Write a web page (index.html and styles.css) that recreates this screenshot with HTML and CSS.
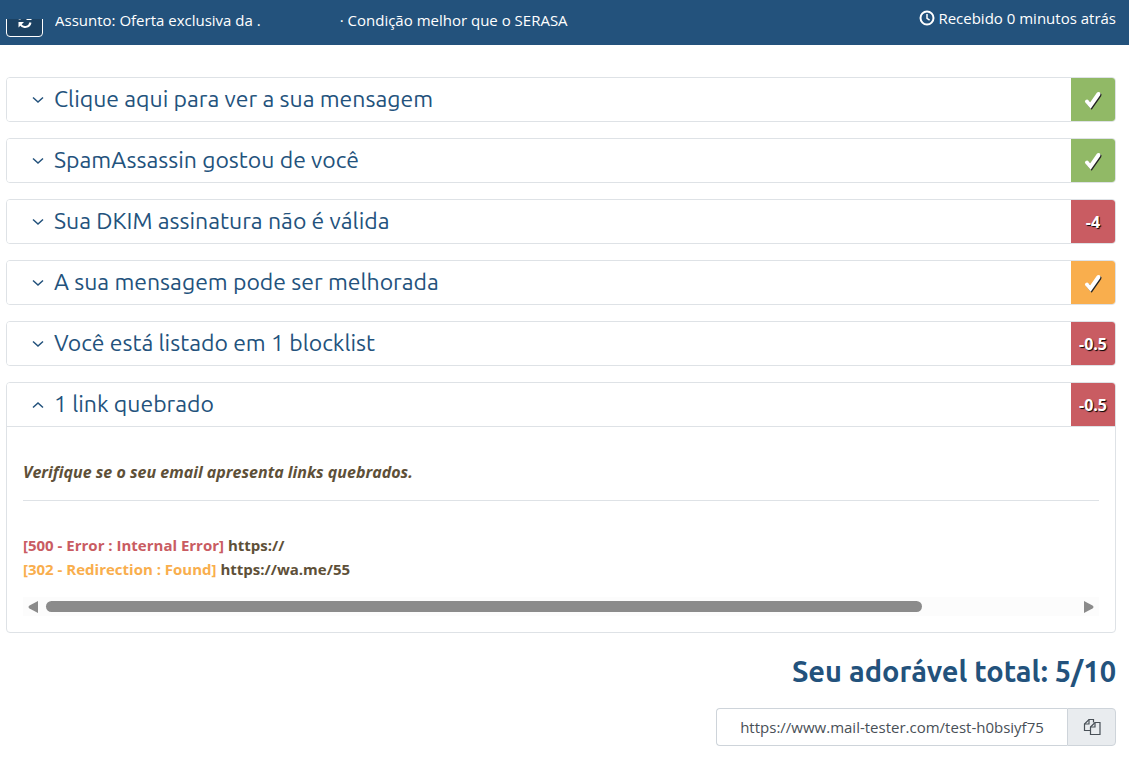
FILE: index.html
```html
<!DOCTYPE html>
<html lang="pt">
<head>
    <meta charset="UTF-8">
    <meta name="viewport" content="width=device-width, initial-scale=1.0">
    <title>Mail Tester</title>
    <link rel="stylesheet" href="styles.css">
</head>
<body>
    <header class="topbar">
        <div class="refresh-wrap">
            <button class="refresh" type="button" aria-label="Atualizar">
                <svg width="14" height="14" viewBox="0 0 14 14" fill="none" stroke="#fff" stroke-width="2">
                    <path d="M1.500 5.500A5.500 5.500 0 0 1 11.500 3.500M12.500 8.500A5.500 5.500 0 0 1 2.500 10.500"/>
                    <path d="M13.500 .5v5.500H8zM.5 13.500V8H6z" fill="#fff" stroke="none"/>
                </svg>
            </button>
        </div>
        <div class="subject">
            <span><span class="subject-label">Assunto:</span> Oferta exclusiva da .</span>
            <span class="subject-end"><span class="dot">·</span> Condição melhor que o SERASA</span>
        </div>
        <div class="received">
            <svg width="16" height="16" viewBox="0 0 16 16" fill="none" stroke="#fff" stroke-width="2">
                <circle cx="8" cy="8" r="6.5"/>
                <path d="M8 4v4.3l2.6 1.8" stroke-width="1.5"/>
            </svg>
            <span>Recebido 0 minutos atrás</span>
        </div>
    </header>

    <main class="content">
        <section class="result">
            <button class="result-header" type="button" aria-expanded="false">
                <svg class="chevron" width="12" height="8" viewBox="0 0 12 8"><path d="M1 1.5l5 4.5 5-4.5"/></svg>
                <span class="title">Clique aqui para ver a sua mensagem</span>
                <span class="status success"><svg class="check" width="18" height="18" viewBox="0 0 18 18"><path d="M3 10.500l3.500 4L14.500 3"/></svg></span>
            </button>
        </section>

        <section class="result">
            <button class="result-header" type="button" aria-expanded="false">
                <svg class="chevron" width="12" height="8" viewBox="0 0 12 8"><path d="M1 1.5l5 4.5 5-4.5"/></svg>
                <span class="title">SpamAssassin gostou de você</span>
                <span class="status success"><svg class="check" width="18" height="18" viewBox="0 0 18 18"><path d="M3 10.500l3.500 4L14.500 3"/></svg></span>
            </button>
        </section>

        <section class="result">
            <button class="result-header" type="button" aria-expanded="false">
                <svg class="chevron" width="12" height="8" viewBox="0 0 12 8"><path d="M1 1.5l5 4.5 5-4.5"/></svg>
                <span class="title">Sua DKIM assinatura não é válida</span>
                <span class="status failure">-4</span>
            </button>
        </section>

        <section class="result">
            <button class="result-header" type="button" aria-expanded="false">
                <svg class="chevron" width="12" height="8" viewBox="0 0 12 8"><path d="M1 1.5l5 4.5 5-4.5"/></svg>
                <span class="title">A sua mensagem pode ser melhorada</span>
                <span class="status warning"><svg class="check" width="18" height="18" viewBox="0 0 18 18"><path d="M3 10.500l3.500 4L14.500 3"/></svg></span>
            </button>
        </section>

        <section class="result">
            <button class="result-header" type="button" aria-expanded="false">
                <svg class="chevron" width="12" height="8" viewBox="0 0 12 8"><path d="M1 1.5l5 4.5 5-4.5"/></svg>
                <span class="title">Você está listado em 1 blocklist</span>
                <span class="status failure">-0.5</span>
            </button>
        </section>

        <section class="result">
            <button class="result-header" type="button" aria-expanded="true" aria-controls="links">
                <svg class="chevron" width="12" height="8" viewBox="0 0 12 8"><path d="M1 6.5L6 2l5 4.5"/></svg>
                <span class="title">1 link quebrado</span>
                <span class="status failure">-0.5</span>
            </button>
            <div class="result-body" id="links">
                <p class="about">Verifique se o seu email apresenta links quebrados.</p>
                <div class="links">
                    <div><span class="error">[500 - Error : Internal Error]</span> https://</div>
                    <div><span class="redirect">[302 - Redirection : Found]</span> https://wa.me/55</div>
                </div>
                <div class="scrollbar">
                    <svg width="10" height="14" viewBox="0 0 10 14"><path d="M10 1v12L1.500 8.500Q-.5 7 1.500 5.500z"/></svg>
                    <div class="track"><div class="thumb"></div></div>
                    <svg width="10" height="14" viewBox="0 0 10 14"><path d="M0 1v12l8.500-4.500q2-1.500 0-3z"/></svg>
                </div>
            </div>
        </section>

        <h1 class="total">Seu adorável total: 5/10</h1>

        <div class="share">
            <input class="share-url" type="text" value="https://www.mail-tester.com/test-h0bsiyf75" aria-label="Link do teste" readonly>
            <button class="copy" type="button" aria-label="Copiar">
                <svg width="18" height="18" viewBox="0 0 18 18" fill="none" stroke="#495057" stroke-width="1.2">
                    <path d="M7 12.5H1.5V6L6 1.5h4.5v3"/>
                    <path d="M6 1.5V6H1.5"/>
                    <path d="M7.5 9L12 4.500h5v12H7.500z"/>
                    <path d="M12 4.500V9H7.500"/>
                </svg>
            </button>
        </div>
    </main>
</body>
</html>
```
FILE: styles.css
```css
* {
    box-sizing: border-box;
}
body {
    margin: 0;
    background: #fff;
    color: #5e5038;
    font-family: "Segoe UI", "Open Sans", sans-serif;
    font-size: 15px;
    line-height: 24px;
}
button {
    margin: 0;
    padding: 0;
    font: inherit;
    cursor: pointer;
}
svg {
    display: block;
    flex: none;
}

/* top bar */
.topbar {
    display: flex;
    align-items: flex-start;
    height: 45px;
    padding: 0 13px 0 6px;
    background: #23527c;
    color: #fff;
}
.refresh-wrap {
    display: flex;
    align-items: flex-end;
    height: 18px;
    margin-top: 19px;
    overflow: hidden;
}
.refresh {
    display: flex;
    align-items: center;
    justify-content: center;
    flex: none;
    width: 37px;
    height: 32px;
    background: #1c4263;
    border: 1px solid #fff;
    border-radius: 4px;
}
.subject {
    display: flex;
    gap: 79px;
    margin: 8px 0 0 12px;
    white-space: nowrap;
}
.subject-label {
    display: inline-block;
    height: 24px;
    vertical-align: top;
    clip-path: inset(9px 0 0 0);
}
.received {
    display: flex;
    align-items: center;
    gap: 3px;
    margin: 6px 0 0 auto;
    white-space: nowrap;
}

/* results */
.content {
    padding: 32px 13px 13px 6px;
}
.result {
    margin-bottom: 16px;
    border: 1px solid #dee2e6;
    border-radius: 4px;
    overflow: hidden;
}
.result-header {
    display: flex;
    align-items: center;
    width: 100%;
    height: 43px;
    padding-left: 25px;
    background: #fff;
    border: 0;
    color: #23527c;
    text-align: left;
}
.chevron {
    margin-right: 10px;
    fill: none;
    stroke: #23527c;
    stroke-width: 1.5;
}
.title {
    flex: 1;
    padding-bottom: 2px;
    font-family: Ubuntu, "Noto Sans", sans-serif;
    font-size: 23px;
}
.status {
    display: flex;
    align-items: center;
    justify-content: center;
    width: 44px;
    height: 100%;
    color: #fff;
    font-size: 16px;
    font-weight: bold;
    text-shadow: 1px 1px 1px #000;
}
.success {
    background: #91b966;
}
.warning {
    background: #f9ae4d;
}
.failure {
    background: #c95c62;
}
.check {
    fill: none;
    stroke: #fff;
    stroke-width: 4;
    stroke-linecap: round;
    filter: drop-shadow(1px 1px 0 #222);
}
.result-body {
    padding: 33px 16px 16px;
    border-top: 1px solid #dee2e6;
    font-weight: bold;
}
.about {
    margin: 0 0 32px;
    padding-bottom: 16px;
    border-bottom: 1px solid #dee2e6;
    font-size: 16px;
    font-style: italic;
}
.links {
    overflow: hidden;
    white-space: nowrap;
}
.error {
    color: #c95c62;
}
.redirect {
    color: #f9ae4d;
}
.scrollbar {
    display: flex;
    align-items: center;
    gap: 8px;
    height: 19px;
    margin-top: 16px;
    padding: 0 5px;
    background: #fcfcfc;
    fill: #8b8b8b;
}
.track {
    flex: 1;
}
.thumb {
    width: 85%;
    height: 11px;
    background: #8b8b8b;
    border-radius: 6px;
}

/* total and share link */
.total {
    margin: 0 0 15px;
    color: #23527c;
    font-family: Ubuntu, "Noto Sans", sans-serif;
    font-size: 29px;
    line-height: 44px;
    text-align: right;
}
.share {
    display: flex;
    justify-content: flex-end;
}
.share-url {
    width: 351px;
    height: 38px;
    padding: 0 12px;
    border: 1px solid #ced4da;
    border-right: 0;
    border-radius: 4px 0 0 4px;
    color: #495057;
    font: inherit;
    text-align: center;
}
.copy {
    display: flex;
    align-items: center;
    justify-content: center;
    width: 49px;
    height: 38px;
    background: #e9ecef;
    border: 1px solid #ced4da;
    border-radius: 0 4px 4px 0;
}
```
